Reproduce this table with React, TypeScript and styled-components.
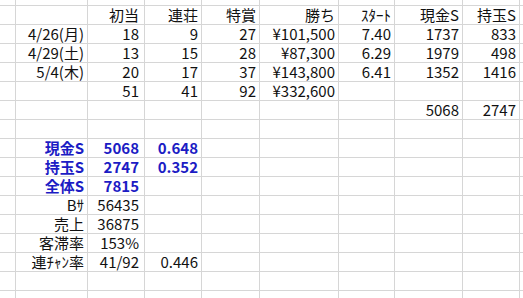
import React from 'react';
import styled, { createGlobalStyle } from 'styled-components';

const GlobalStyle = createGlobalStyle`
  html, body {
    margin: 0;
    padding: 0;
    background: #ffffff;
    overflow: hidden;
  }
`;

// column widths include the 1px grid line on the right
const COLS = [16, 72, 57, 57, 58, 79, 56, 68, 57];

const Sheet = styled.div`
  display: grid;
  grid-template-columns: ${COLS.map((w) => w + 'px').join(' ')} 1fr;
  grid-template-rows: 6px repeat(16, 19px);
  width: 523px;
  height: 298px;
  overflow: hidden;
  font-family: "Noto Sans CJK JP", "Noto Sans", sans-serif;
  font-size: 15px;
  color: #111;
`;

const Cell = styled.div<{ $blue?: boolean; $pad: number }>`
  box-sizing: border-box;
  border-right: 1px solid #d6d6d6;
  border-bottom: 1px solid #d6d6d6;
  line-height: 18px;
  text-align: right;
  padding-right: ${(p) => p.$pad}px;
  white-space: nowrap;
  overflow: visible;
  font-weight: ${(p) => (p.$blue ? 700 : 400)};
  color: ${(p) => (p.$blue ? '#1c1cc4' : '#111')};
`;

type Row = { cells: string[]; blue?: boolean };

// cells start at column A (the narrow column left of A stays empty)
const rows: Row[] = [
  { cells: ['', '初当', '連荘', '特賞', '勝ち', 'ｽﾀｰﾄ', '現金S', '持玉S'] },
  { cells: ['4/26(月)', '18', '9', '27', '¥101,500', '7.40', '1737', '833'] },
  { cells: ['4/29(土)', '13', '15', '28', '¥87,300', '6.29', '1979', '498'] },
  { cells: ['5/4(木)', '20', '17', '37', '¥143,800', '6.41', '1352', '1416'] },
  { cells: ['', '51', '41', '92', '¥332,600'] },
  { cells: ['', '', '', '', '', '', '5068', '2747'] },
  { cells: [] },
  { cells: ['現金S', '5068', '0.648'], blue: true },
  { cells: ['持玉S', '2747', '0.352'], blue: true },
  { cells: ['全体S', '7815'], blue: true },
  { cells: ['Bｻ', '56435'] },
  { cells: ['売上', '36875'] },
  { cells: ['客滞率', '153%'] },
  { cells: ['連ﾁｬﾝ率', '41/92', '0.446'] },
  { cells: [] },
  { cells: [] },
];

const TOTAL_COLS = COLS.length + 1;

export default function App() {
  const grid: React.ReactNode[] = [];

  // partial top row
  for (let c = 0; c < TOTAL_COLS; c++) {
    grid.push(<Cell key={'top' + c} $pad={3} />);
  }

  rows.forEach((row, r) => {
    for (let c = 0; c < TOTAL_COLS; c++) {
      const text = c > 0 ? row.cells[c - 1] ?? '' : '';
      grid.push(
        <Cell key={r + '-' + c} $blue={row.blue} $pad={c === 2 ? 5 : 3}>
          {text}
        </Cell>
      );
    }
  });

  return (
    <>
      <GlobalStyle />
      <Sheet>{grid}</Sheet>
    </>
  );
}
